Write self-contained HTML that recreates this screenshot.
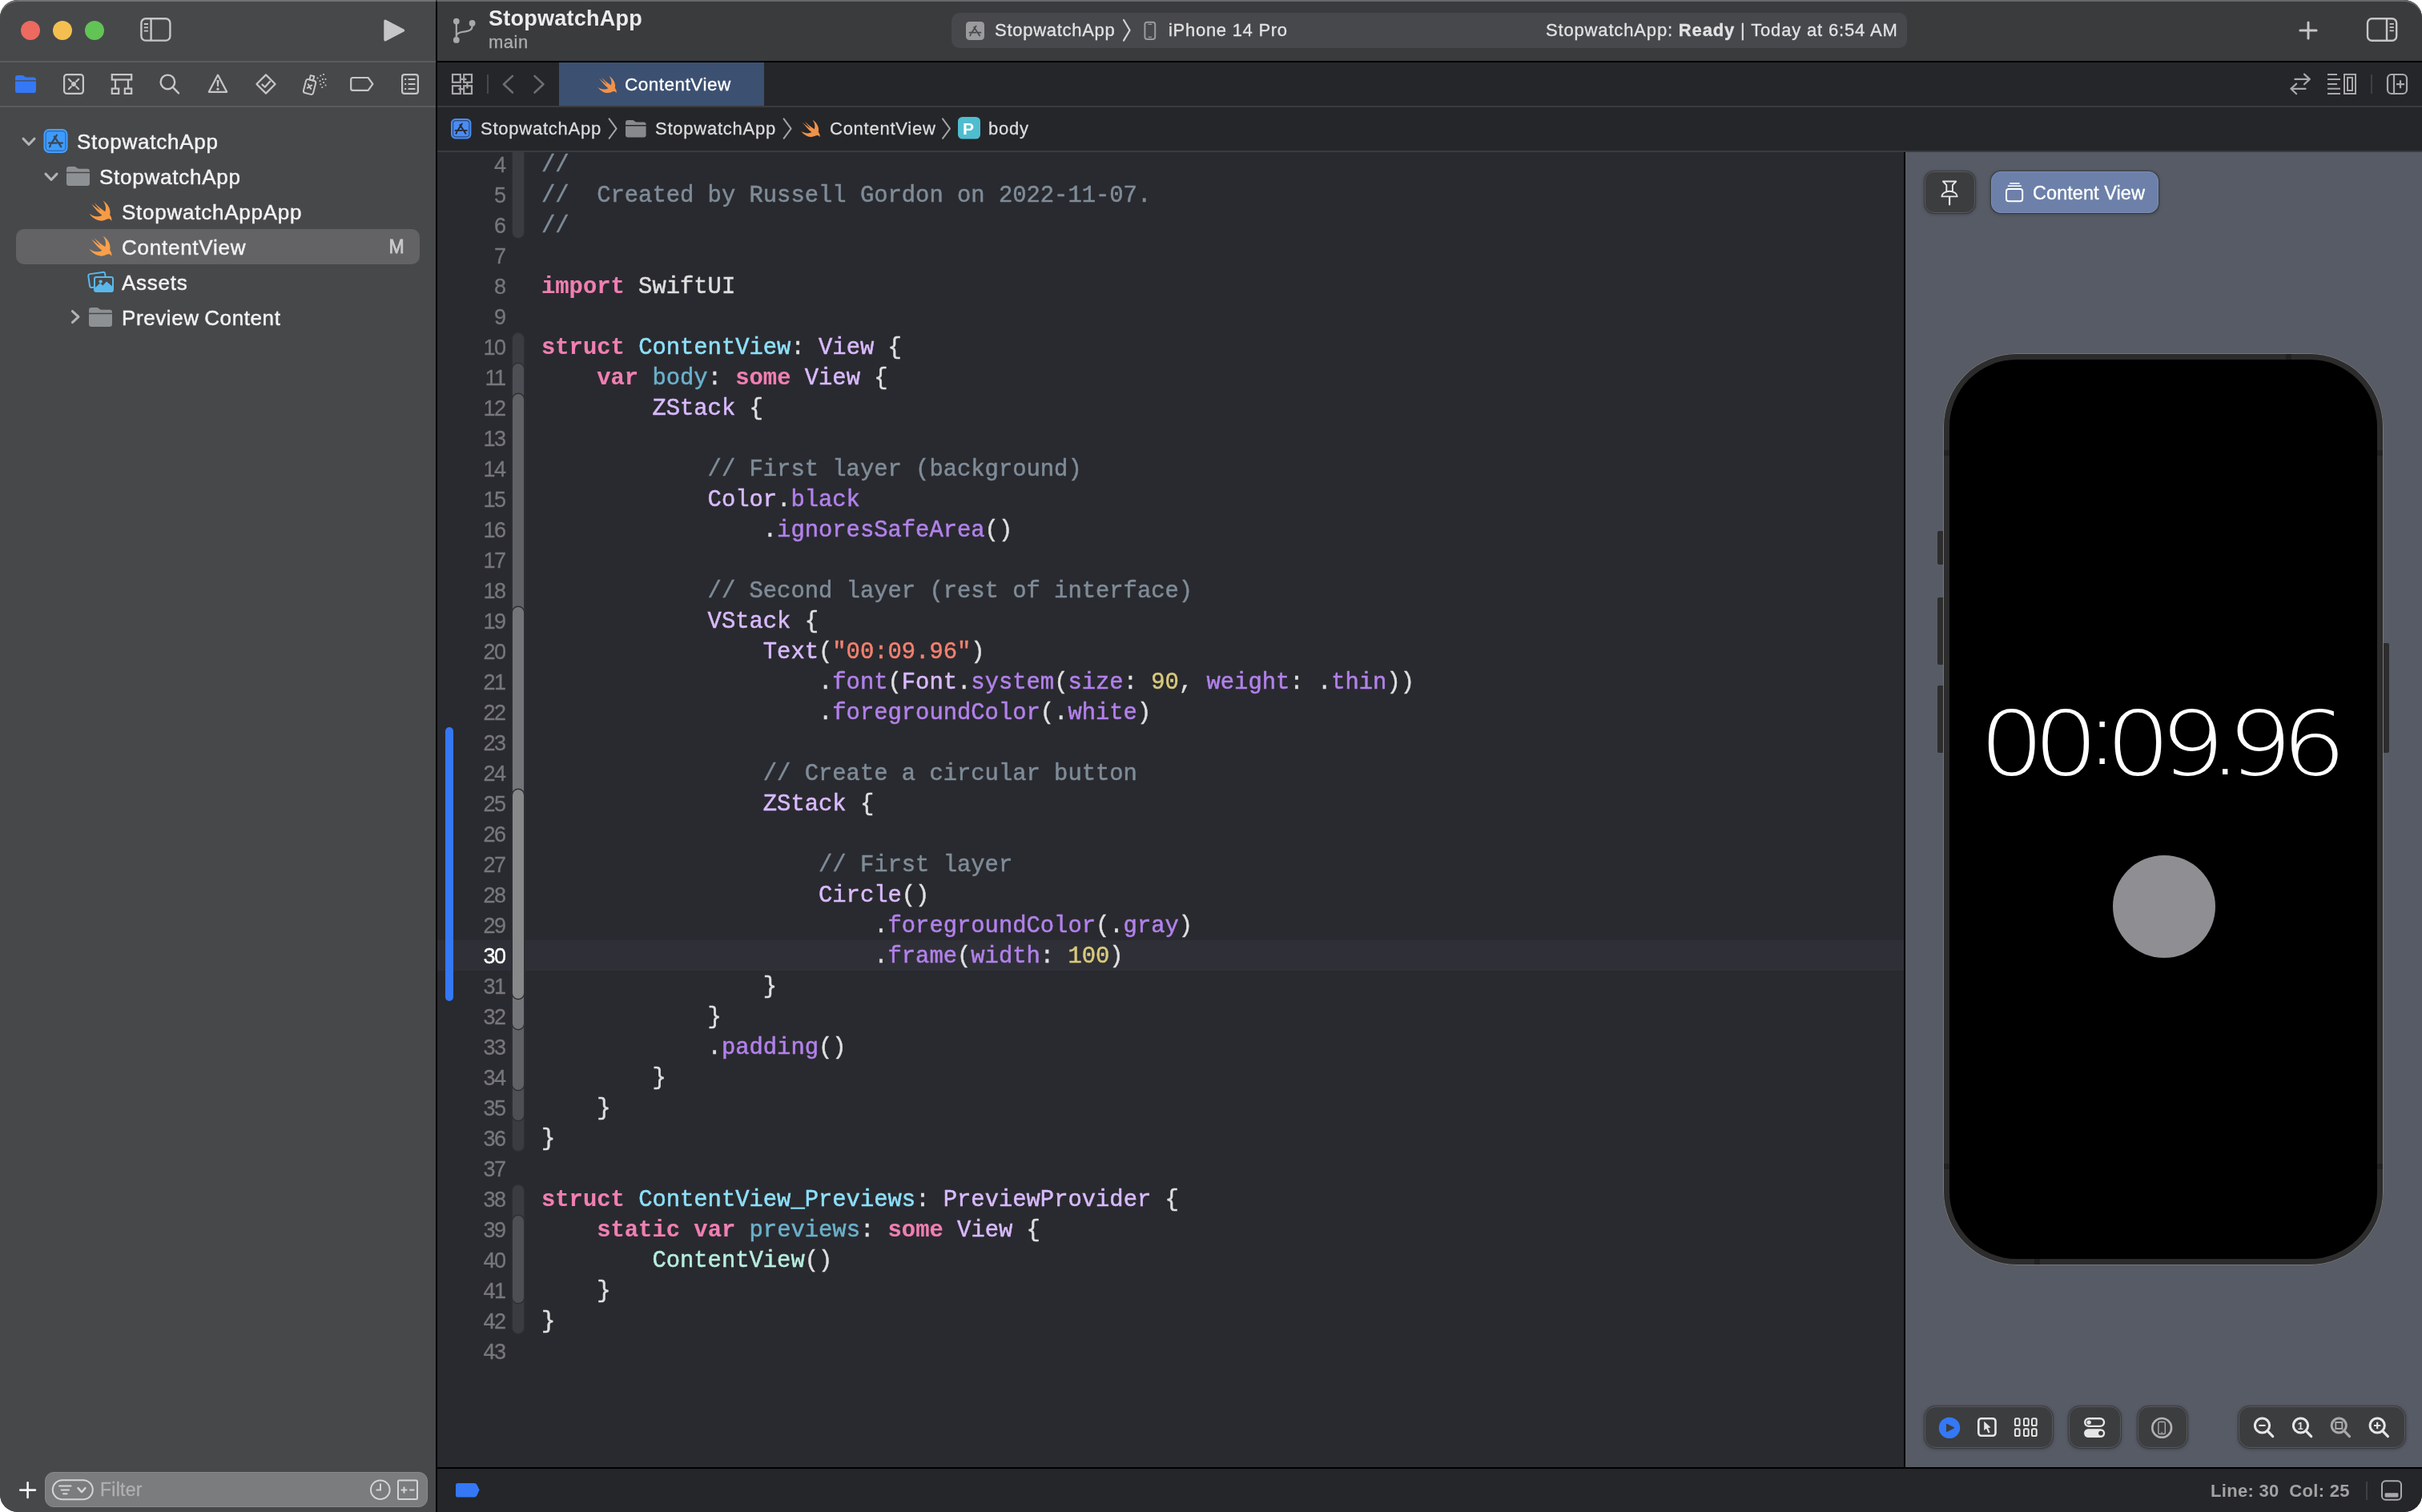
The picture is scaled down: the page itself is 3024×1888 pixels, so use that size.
<!DOCTYPE html>
<html lang="en">
<head>
<meta charset="utf-8">
<title>StopwatchApp — ContentView.swift</title>
<style>
html,body{margin:0;padding:0;background:#fff;}
body{width:3024px;height:1888px;overflow:hidden;position:relative;font-family:"Liberation Sans",sans-serif;color:#e6e6e6;-webkit-font-smoothing:antialiased;}
#win{will-change:transform;position:absolute;left:0;top:0;width:3024px;height:1888px;border-radius:22px;overflow:hidden;background:#292a2f;}
.abs{position:absolute;}
svg{position:absolute;overflow:visible;}
.t{position:absolute;white-space:nowrap;line-height:1;z-index:2;}
#ic{z-index:1;}
/* sidebar */
#side{position:absolute;left:0;top:0;width:544px;height:1888px;background:#47484a;}
#toph{position:absolute;left:0;top:0;width:3024px;height:1888px;border-radius:22px;box-shadow:inset 0 2px 0 0 rgba(255,255,255,0.23);z-index:3;pointer-events:none;}
#sdiv{position:absolute;left:544px;top:0;width:2px;height:1888px;background:#000;}
.hl{position:absolute;left:0;width:544px;height:2px;background:#5a5b5d;}
.row{font-size:26px;color:#f2f2f3;letter-spacing:0.75px;-webkit-text-stroke:0.45px currentColor;margin-top:1px;}
.tbt{font-size:22px;color:#e2e2e4;letter-spacing:0.72px;-webkit-text-stroke:0.3px currentColor;}
.bc{font-size:22px;color:#dcdcde;letter-spacing:0.75px;-webkit-text-stroke:0.3px currentColor;}
/* toolbar */
#tb{position:absolute;left:546px;top:0;width:2478px;height:76px;background:#3a3b3d;}
#tbline{position:absolute;left:546px;top:76px;width:2478px;height:2px;background:#000;}
#tabs{position:absolute;left:546px;top:78px;width:2478px;height:56px;background:#252629;}
#crumbs{position:absolute;left:546px;top:134px;width:2478px;height:56px;background:#252629;}
/* editor */
#ed{position:absolute;left:546px;top:190px;width:1831px;height:1642px;background:#292a2f;overflow:hidden;}
#code{position:absolute;left:0;top:-4px;width:1831px;font-family:"Liberation Mono",monospace;font-size:28.83px;color:#dfdfe0;}
.ln{position:relative;height:38px;line-height:38px;white-space:pre;}
.ln.cur{background:#2f3037;}
.num{position:absolute;left:0;top:0;width:84.6px;text-align:right;color:#77777b;font-family:"Liberation Sans",sans-serif;font-size:27px;letter-spacing:-1.5px;line-height:41.6px;-webkit-text-stroke:0.3px currentColor;}
.cur .num{color:#ffffff;}
.tx{position:absolute;left:130px;top:2px;-webkit-text-stroke:0.5px currentColor;}
.k{color:#f07fb2;font-weight:bold;-webkit-text-stroke:0.15px currentColor;}
.d{color:#8de0fb;}
.f{color:#b281eb;}
.v{color:#6bb1cd;}
.c{color:#7f8c98;}
.s{color:#f4816f;}
.n{color:#d9c97c;}
.p{color:#b7eedd;}
.ty{color:#d9baff;}
.rb{position:absolute;left:94px;width:14px;border-radius:7px;box-shadow:0 0 0 1.5px #2e2f34;}
/* canvas */
#cdiv{position:absolute;left:2377px;top:190px;width:2px;height:1642px;background:#000;}
#cv{position:absolute;left:2379px;top:190px;width:645px;height:1642px;background:#575b65;overflow:hidden;}
.cbtn{position:absolute;box-sizing:border-box;background:#3c3d3e;border:1px solid #59595b;border-radius:12px;box-shadow:0 0 1px 1px rgba(40,42,48,0.55),0 1px 5px rgba(0,0,0,0.3);}
.r14{border-radius:14px;}
#phone{overflow:hidden;position:absolute;left:47px;top:251px;width:550px;height:1139px;border-radius:92px;background:#2c2c2d;box-shadow:0 0 0 1px #77787a inset;}
#screen{position:absolute;left:8px;top:8px;width:534px;height:1123px;border-radius:84px;background:#000;overflow:hidden;}
#sw{position:absolute;left:-6.7px;top:425px;width:534px;text-align:center;color:#fff;font-family:"DejaVu Sans Light","DejaVu Sans",sans-serif;font-weight:200;font-size:110.5px;line-height:1;white-space:nowrap;letter-spacing:-11.4px;transform:scaleX(1.15);transform-origin:50% 50%;}
#sw .cl{margin:0 -3.2px;position:relative;top:-13.5px;}
#sw .pd{margin:0 -3.65px 0 -5.85px;}
#bline{position:absolute;left:546px;top:1832px;width:2478px;height:2px;background:#000;}
#bot{position:absolute;left:546px;top:1834px;width:2478px;height:54px;background:#252629;}
</style>
</head>
<body>

<div id="win">
<div id="side">
  <div class="hl" style="top:76px"></div>
  <div class="hl" style="top:132px"></div>
  <div class="abs" style="left:20px;top:286px;width:504px;height:44px;border-radius:10px;background:#636366;"></div>
  <div class="t row" style="left:96px;top:163px;">StopwatchApp</div>
  <div class="t row" style="left:124px;top:207px;">StopwatchApp</div>
  <div class="t row" style="left:152px;top:251px;">StopwatchAppApp</div>
  <div class="t row" style="left:152px;top:295px;">ContentView</div>
  <div class="t row" style="left:152px;top:339px;">Assets</div>
  <div class="t row" style="left:152px;top:383px;word-spacing:-1.3px;letter-spacing:0.6px;">Preview Content</div>
  <div class="t" style="left:485.5px;top:296.5px;font-size:23px;font-weight:normal;-webkit-text-stroke:0.8px #c9c9cb;color:#c9c9cb;">M</div>
  <div class="abs" style="left:56px;top:1838px;width:478px;height:44px;border-radius:11px;background:#7b7c7e;box-sizing:border-box;border:1px solid #88898b;"></div>
  <div class="t" style="left:125px;top:1849px;font-size:23px;color:#b0b0b2;letter-spacing:0.25px;-webkit-text-stroke:0.3px currentColor;">Filter</div>
</div>
<div id="sdiv"></div>
<div id="toph"></div>
<div id="tb">
  <div class="t" style="left:64px;top:9.5px;font-size:27px;font-weight:bold;color:#ececee;letter-spacing:0.25px;">StopwatchApp</div>
  <div class="t" style="left:64px;top:41.5px;font-size:22px;color:#adadaf;letter-spacing:0.5px;-webkit-text-stroke:0.3px currentColor;">main</div>
  <div class="abs" style="left:642px;top:16px;width:1193px;height:44px;border-radius:10px;background:#47484b;"></div>
  <div class="t tbt" style="left:696px;top:27px;">StopwatchApp</div>
  <div class="t tbt" style="left:913px;top:27px;">iPhone 14 Pro</div>
  <div class="t tbt" style="left:1384px;top:27px;letter-spacing:0.84px;">StopwatchApp: <b>Ready</b> | Today at 6:54 AM</div>
</div>
<div id="tbline"></div>
<div id="tabs">
  <div class="abs" style="left:152px;top:0;width:256px;height:54px;background:#3c5071;"></div>
  <div class="t" style="left:234px;top:17px;font-size:22.5px;color:#ffffff;letter-spacing:0.5px;-webkit-text-stroke:0.3px currentColor;">ContentView</div>
  <div class="abs" style="left:0;top:54px;width:2478px;height:2px;background:#3a3b3f;"></div>
</div>
<div id="crumbs">
  <div class="t bc" style="left:54px;top:16px;">StopwatchApp</div>
  <div class="t bc" style="left:272px;top:16px;">StopwatchApp</div>
  <div class="t bc" style="left:490px;top:16px;">ContentView</div>
  <div class="t" style="left:656px;top:16px;font-size:21px;font-weight:bold;color:#fff;">P</div>
  <div class="t bc" style="left:688px;top:16px;">body</div>
  <div class="abs" style="left:0;top:54px;width:2478px;height:2px;background:#3a3b3f;"></div>
</div>
<div id="ed">
<div id="code">
<div class="ln"><span class="num">4</span><span class="tx"><span class="c">//</span></span></div>
<div class="ln"><span class="num">5</span><span class="tx"><span class="c">//  Created by Russell Gordon on 2022-11-07.</span></span></div>
<div class="ln"><span class="num">6</span><span class="tx"><span class="c">//</span></span></div>
<div class="ln"><span class="num">7</span><span class="tx"></span></div>
<div class="ln"><span class="num">8</span><span class="tx"><span class="k">import</span> SwiftUI</span></div>
<div class="ln"><span class="num">9</span><span class="tx"></span></div>
<div class="ln"><span class="num">10</span><span class="tx"><span class="k">struct</span> <span class="d">ContentView</span>: <span class="ty">View</span> {</span></div>
<div class="ln"><span class="num">11</span><span class="tx">    <span class="k">var</span> <span class="v">body</span>: <span class="k">some</span> <span class="ty">View</span> {</span></div>
<div class="ln"><span class="num">12</span><span class="tx">        <span class="ty">ZStack</span> {</span></div>
<div class="ln"><span class="num">13</span><span class="tx"></span></div>
<div class="ln"><span class="num">14</span><span class="tx">            <span class="c">// First layer (background)</span></span></div>
<div class="ln"><span class="num">15</span><span class="tx">            <span class="ty">Color</span>.<span class="f">black</span></span></div>
<div class="ln"><span class="num">16</span><span class="tx">                .<span class="f">ignoresSafeArea</span>()</span></div>
<div class="ln"><span class="num">17</span><span class="tx"></span></div>
<div class="ln"><span class="num">18</span><span class="tx">            <span class="c">// Second layer (rest of interface)</span></span></div>
<div class="ln"><span class="num">19</span><span class="tx">            <span class="ty">VStack</span> {</span></div>
<div class="ln"><span class="num">20</span><span class="tx">                <span class="ty">Text</span>(<span class="s">"00:09.96"</span>)</span></div>
<div class="ln"><span class="num">21</span><span class="tx">                    .<span class="f">font</span>(<span class="ty">Font</span>.<span class="f">system</span>(<span class="f">size</span>: <span class="n">90</span>, <span class="f">weight</span>: .<span class="f">thin</span>))</span></div>
<div class="ln"><span class="num">22</span><span class="tx">                    .<span class="f">foregroundColor</span>(.<span class="f">white</span>)</span></div>
<div class="ln"><span class="num">23</span><span class="tx"></span></div>
<div class="ln"><span class="num">24</span><span class="tx">                <span class="c">// Create a circular button</span></span></div>
<div class="ln"><span class="num">25</span><span class="tx">                <span class="ty">ZStack</span> {</span></div>
<div class="ln"><span class="num">26</span><span class="tx"></span></div>
<div class="ln"><span class="num">27</span><span class="tx">                    <span class="c">// First layer</span></span></div>
<div class="ln"><span class="num">28</span><span class="tx">                    <span class="ty">Circle</span>()</span></div>
<div class="ln"><span class="num">29</span><span class="tx">                        .<span class="f">foregroundColor</span>(.<span class="f">gray</span>)</span></div>
<div class="ln cur"><span class="num">30</span><span class="tx">                        .<span class="f">frame</span>(<span class="f">width</span>: <span class="n">100</span>)</span></div>
<div class="ln"><span class="num">31</span><span class="tx">                }</span></div>
<div class="ln"><span class="num">32</span><span class="tx">            }</span></div>
<div class="ln"><span class="num">33</span><span class="tx">            .<span class="f">padding</span>()</span></div>
<div class="ln"><span class="num">34</span><span class="tx">        }</span></div>
<div class="ln"><span class="num">35</span><span class="tx">    }</span></div>
<div class="ln"><span class="num">36</span><span class="tx">}</span></div>
<div class="ln"><span class="num">37</span><span class="tx"></span></div>
<div class="ln"><span class="num">38</span><span class="tx"><span class="k">struct</span> <span class="d">ContentView_Previews</span>: <span class="ty">PreviewProvider</span> {</span></div>
<div class="ln"><span class="num">39</span><span class="tx">    <span class="k">static</span> <span class="k">var</span> <span class="v">previews</span>: <span class="k">some</span> <span class="ty">View</span> {</span></div>
<div class="ln"><span class="num">40</span><span class="tx">        <span class="p">ContentView</span>()</span></div>
<div class="ln"><span class="num">41</span><span class="tx">    }</span></div>
<div class="ln"><span class="num">42</span><span class="tx">}</span></div>
<div class="ln"><span class="num">43</span><span class="tx"></span></div>
</div>
<div class="rb" style="top:-116px;height:222.7px;background:#3b3c41;"></div>
<div class="rb" style="top:226.0px;height:1020.7px;background:#3b3c41;"></div>
<div class="rb" style="top:264.0px;height:944.7px;background:#4e4f54;"></div>
<div class="rb" style="top:302.0px;height:868.7px;background:#606165;"></div>
<div class="rb" style="top:568.0px;height:526.7px;background:#747578;"></div>
<div class="rb" style="top:796.0px;height:260.7px;background:#87888a;"></div>
<div class="rb" style="top:1290.0px;height:184.7px;background:#3b3c41;"></div>
<div class="rb" style="top:1328.0px;height:108.7px;background:#4e4f54;"></div>
<div class="abs" style="left:10px;top:718px;width:10px;height:342px;border-radius:5px;background:#3478f6;"></div>
</div>
<div id="cdiv"></div>
<div id="cv">
  <div class="cbtn" style="left:24.3px;top:23.9px;width:62.5px;height:52px;"></div>
  <div class="cbtn" style="left:107px;top:24px;width:209px;height:52px;background:#6c80a9;border-color:#7c8eb4;"></div>
  <div class="t" style="left:159px;top:39.5px;font-size:23.5px;color:#fff;letter-spacing:0.05px;-webkit-text-stroke:0.35px #fff;">Content View</div>
  <!-- phone -->
  <div class="abs" style="left:40px;top:473px;width:8px;height:42px;background:#2d2d2e;border-radius:2px 0 0 2px;"></div>
  <div class="abs" style="left:40px;top:556px;width:8px;height:84px;background:#2d2d2e;border-radius:2px 0 0 2px;"></div>
  <div class="abs" style="left:40px;top:666px;width:8px;height:84px;background:#2d2d2e;border-radius:2px 0 0 2px;"></div>
  <div class="abs" style="left:596px;top:613px;width:7.5px;height:137px;background:#2d2d2e;border-radius:0 2px 2px 0;"></div>
  <div id="phone">
    <div class="abs" style="left:1px;top:121px;width:7px;height:7px;background:#222223;"></div>
    <div class="abs" style="left:542px;top:121px;width:7px;height:7px;background:#222223;"></div>
    <div class="abs" style="left:1px;top:1012px;width:7px;height:7px;background:#222223;"></div>
    <div class="abs" style="left:542px;top:1012px;width:7px;height:7px;background:#222223;"></div>
    <div class="abs" style="left:428px;top:1px;width:7px;height:7px;background:#222223;"></div>
    <div class="abs" style="left:114px;top:1131px;width:7px;height:7px;background:#222223;"></div>
    <div id="screen">
      <div id="sw">00<span class="cl">:</span>09<span class="pd">.</span>96</div>
      <div class="abs" style="left:203.8px;top:618.6px;width:128.5px;height:128.5px;border-radius:50%;background:#8e8e93;"></div>
    </div>
  </div>
  <!-- bottom toolbar -->
  <div class="cbtn r14" style="left:24px;top:1566px;width:160px;height:52px;"></div>
  <div class="cbtn r14" style="left:204px;top:1566px;width:64.5px;height:52px;"></div>
  <div class="cbtn r14" style="left:289.5px;top:1566px;width:62px;height:52px;"></div>
  <div class="cbtn r14" style="left:416px;top:1566px;width:207.5px;height:52px;"></div>
</div>
<div id="bline"></div>
<div id="bot">
  <div class="t" style="left:2214px;top:17px;font-size:22px;font-weight:bold;color:#a2a2a4;letter-spacing:0.3px;word-spacing:0px;">Line: 30&nbsp;&nbsp;Col: 25</div>
  <div class="abs" style="left:2408px;top:15.5px;width:2px;height:23px;background:#3f4044;"></div>
</div>
<svg id="ic" width="3024" height="1888" viewBox="0 0 3024 1888" style="left:0;top:0;pointer-events:none"><circle cx="38" cy="38" r="12" fill="#ec6a5f"/><circle cx="78" cy="38" r="12" fill="#f4bf50"/><circle cx="118" cy="38" r="12" fill="#61c455"/>
<g fill="none" stroke="#c6c6c8" stroke-width="2.4"><rect x="176.4" y="23.2" width="36" height="27.4" rx="5.5"/><path d="M188.6,23.2 V50.6"/><path d="M179.8,30 h5.2 M179.8,34.3 h5.2 M179.8,38.6 h5.2" stroke-width="1.8"/></g>
<path d="M481,26.2 L503.5,38 L481,49.8 Z" fill="#c6c6c8" stroke="#c6c6c8" stroke-width="3.4" stroke-linejoin="round"/>
<path fill="#3478f6" d="M22.08,94.00 H27.84 Q29.14,94.00 30.18,95.10 L31.22,96.09 Q32.00,96.53 33.30,96.53 H41.92 Q45.00,96.53 45.00,99.61 V100.27 H19.00 V97.08 Q19.00,94.00 22.08,94.00 Z"/><path fill="#3478f6" d="M19.00,101.59 H45.00 V112.92 Q45.00,116.00 41.92,116.00 H22.08 Q19.00,116.00 19.00,112.92 Z"/>
<g fill="none" stroke="#c6c6c8" stroke-width="2.2" stroke-linecap="round"><rect x="80.1" y="93.1" width="23.8" height="23.8" rx="3.5"/><path d="M85.8,98.8 l3,3 M98.2,98.8 l-3,3 M85.8,111.2 l3,-3 M98.2,111.2 l-3,-3"/></g><circle cx="92" cy="105" r="3" fill="#c6c6c8"/>
<g fill="none" stroke="#c6c6c8" stroke-width="2.2"><rect x="139.8" y="93.1" width="24.4" height="6.4"/><rect x="139.8" y="110.6" width="8.4" height="6.3"/><rect x="155.8" y="110.6" width="8.4" height="6.3"/><path d="M144,99.5 V110.6 M160,99.5 V110.6"/></g>
<g fill="none" stroke="#c6c6c8" stroke-width="2.4" stroke-linecap="round"><circle cx="209.4" cy="102.4" r="8.8"/><path d="M215.8,108.8 L223,116.4"/></g>
<g fill="none" stroke="#c6c6c8" stroke-width="2.2" stroke-linejoin="round"><path d="M272,93.6 L283.2,114.8 H260.8 Z"/></g><path d="M270.5,100 H273.5 L272.9,108 H271.1 Z" fill="#c6c6c8"/><circle cx="272" cy="111.2" r="1.6" fill="#c6c6c8"/>
<g fill="none" stroke="#c6c6c8" stroke-width="2.2" stroke-linejoin="round" stroke-linecap="round"><path d="M332,93.4 L343.6,105 L332,116.6 L320.4,105 Z" stroke-width="2.2"/><path d="M327.4,105.6 L330.8,108.8 L337,101.8"/></g>
<g fill="none" stroke="#c6c6c8" stroke-width="2" stroke-linejoin="round" stroke-linecap="round" transform="rotate(14 390 106)"><rect x="381" y="100.5" width="12.5" height="17.5" rx="2.5"/><rect x="385" y="95" width="4.6" height="5.5"/><path d="M384.8,106.6 l4.6,4.6 M389.4,106.6 l-4.6,4.6"/></g>
<g fill="#c6c6c8"><rect x="395.6" y="96.6" width="1.8" height="1.8"/><rect x="399.4" y="93.6" width="1.8" height="1.8"/><rect x="403.2" y="92" width="1.8" height="1.8"/><rect x="398.6" y="100.2" width="1.8" height="1.8"/><rect x="402" y="98" width="1.8" height="1.8"/><rect x="405.6" y="98" width="1.8" height="1.8"/><rect x="399.4" y="104.4" width="1.8" height="1.8"/><rect x="403.2" y="102.2" width="1.8" height="1.8"/><rect x="405.6" y="105.6" width="1.8" height="1.8"/><rect x="401.4" y="108.2" width="1.8" height="1.8"/></g>
<path d="M440.6,97 H459.6 L465.4,104.9 L459.6,112.8 H440.6 Q438.2,112.8 438.2,110.4 V99.4 Q438.2,97 440.6,97 Z" fill="none" stroke="#c6c6c8" stroke-width="2.2" stroke-linejoin="round"/>
<g fill="none" stroke="#c6c6c8" stroke-width="2.2"><rect x="502.1" y="93.1" width="19.8" height="23.8" rx="3"/><path d="M509.6,99 H518.4 M509.6,105 H518.4 M509.6,111 H518.4"/></g><g fill="#c6c6c8"><rect x="505.2" y="98" width="2" height="2"/><rect x="505.2" y="104" width="2" height="2"/><rect x="505.2" y="110" width="2" height="2"/></g>
<path d="M29.0,173.10000000000002 L36,180.5 L43.0,173.10000000000002" fill="none" stroke="#b4b4b6" stroke-width="3" stroke-linecap="round" stroke-linejoin="round"/>
<rect x="54.5" y="161" width="30" height="30" rx="6.6" fill="#45a1ff"/><rect x="56.5" y="163" width="26" height="26" rx="4.8" fill="#2d66a8"/><rect x="57.7" y="164.2" width="23.6" height="23.6" rx="3.6" fill="#3d9bfd"/><g stroke="#3b4652" stroke-width="2.25" stroke-linecap="round" fill="none"><path d="M70.84,168.78 L64.46,178.60 M63.12,180.91 L62.11,183.22"/><path d="M67.82,170.51 L76.22,183.22"/><path d="M61.10,178.60 H70.84 M74.54,178.60 H77.90"/></g>
<path d="M57.0,217.10000000000002 L64,224.5 L71.0,217.10000000000002" fill="none" stroke="#b4b4b6" stroke-width="3" stroke-linecap="round" stroke-linejoin="round"/>
<path fill="#8e9194" d="M86.20,208.00 H92.86 Q94.31,208.00 95.47,209.20 L96.63,210.28 Q97.50,210.76 98.95,210.76 H108.80 Q112.00,210.76 112.00,213.96 V214.84 H83.00 V211.20 Q83.00,208.00 86.20,208.00 Z"/><path fill="#8e9194" d="M83.00,216.28 H112.00 V228.80 Q112.00,232.00 108.80,232.00 H86.20 Q83.00,232.00 83.00,228.80 Z"/>
<path transform="translate(107.86,245.57) scale(1.5376)" fill="#f89b45" d="M13.543 3.41c4.114 2.47 6.545 7.162 5.549 11.131-.024.093-.05.181-.076.272l.002.001c2.062 2.538 1.5 5.258 1.236 4.745-1.072-2.086-3.066-1.568-4.088-1.043a6.803 6.803 0 0 1-.281.158l-.02.012-.002.002c-2.115 1.123-4.957 1.205-7.812-.022a12.568 12.568 0 0 1-5.64-4.838c.649.48 1.35.902 2.097 1.252 3.019 1.414 6.051 1.311 8.197-.002C9.651 12.73 7.101 9.67 5.146 7.191a10.628 10.628 0 0 1-1.005-1.384c2.34 2.142 6.038 4.83 7.365 5.576C8.69 8.408 6.208 4.743 6.324 4.86c4.436 4.47 8.528 6.996 8.528 6.996.154.085.27.154.36.213.085-.215.16-.437.224-.668.708-2.588-.09-5.548-1.893-7.992z"/>
<path transform="translate(107.86,289.57) scale(1.5376)" fill="#fba04a" d="M13.543 3.41c4.114 2.47 6.545 7.162 5.549 11.131-.024.093-.05.181-.076.272l.002.001c2.062 2.538 1.5 5.258 1.236 4.745-1.072-2.086-3.066-1.568-4.088-1.043a6.803 6.803 0 0 1-.281.158l-.02.012-.002.002c-2.115 1.123-4.957 1.205-7.812-.022a12.568 12.568 0 0 1-5.64-4.838c.649.48 1.35.902 2.097 1.252 3.019 1.414 6.051 1.311 8.197-.002C9.651 12.73 7.101 9.67 5.146 7.191a10.628 10.628 0 0 1-1.005-1.384c2.34 2.142 6.038 4.83 7.365 5.576C8.69 8.408 6.208 4.743 6.324 4.86c4.436 4.47 8.528 6.996 8.528 6.996.154.085.27.154.36.213.085-.215.16-.437.224-.668.708-2.588-.09-5.548-1.893-7.992z"/>
<g><rect x="111" y="341" width="21" height="17" rx="2.5" fill="none" stroke="#5bb7e9" stroke-width="2" transform="rotate(-8 121 349)"/><rect x="117" y="345" width="25" height="20" rx="2.8" fill="#47484a"/><rect x="118" y="346" width="23" height="18" rx="2.2" fill="none" stroke="#5bb7e9" stroke-width="2"/><path d="M118.4,359.5 L125,353.5 L128.4,356.4 L133,351.4 L140.8,358 V362 Q140.8,364 138.8,364 H120.4 Q118.4,364 118.4,362 Z" fill="#5bb7e9"/><circle cx="125.6" cy="351.6" r="2.2" fill="#5bb7e9"/></g>
<path d="M90.4,388.6 L98.0,395.6 L90.4,402.6" fill="none" stroke="#b4b4b6" stroke-width="3" stroke-linecap="round" stroke-linejoin="round"/>
<path fill="#8e9194" d="M114.20,384.00 H120.86 Q122.31,384.00 123.47,385.20 L124.63,386.28 Q125.50,386.76 126.95,386.76 H136.80 Q140.00,386.76 140.00,389.96 V390.84 H111.00 V387.20 Q111.00,384.00 114.20,384.00 Z"/><path fill="#8e9194" d="M111.00,392.28 H140.00 V404.80 Q140.00,408.00 136.80,408.00 H114.20 Q111.00,408.00 111.00,404.80 Z"/>
<path d="M25.2,1860.6 H44 M34.6,1851.2 V1870" stroke="#f4f4f4" stroke-width="2.6" stroke-linecap="round" fill="none"/>
<rect x="65.8" y="1848.2" width="50" height="24" rx="12" fill="none" stroke="#d4d4d6" stroke-width="2"/>
<path d="M74,1855.6 H88.6 M76.6,1860.4 H86 M79,1865.2 H83.6" stroke="#d4d4d6" stroke-width="2" stroke-linecap="round"/>
<path d="M97.5,1858.1 L102,1863.1 L106.5,1858.1" fill="none" stroke="#d4d4d6" stroke-width="2.4" stroke-linecap="round" stroke-linejoin="round"/>
<circle cx="474.8" cy="1860.2" r="11.8" fill="none" stroke="#d4d4d6" stroke-width="2"/><path d="M475,1852.4 V1860.6 H469.6" fill="none" stroke="#d4d4d6" stroke-width="2"/>
<rect x="497" y="1848.4" width="24" height="23.6" rx="1.5" fill="none" stroke="#d4d4d6" stroke-width="2"/><path d="M500.6,1860.4 H508.4 M504.5,1856.4 V1864.4 M511.2,1860.4 H517.4" stroke="#d4d4d6" stroke-width="2" fill="none"/>
<g fill="none" stroke="#a9a9ab" stroke-width="2.2"><path d="M569.8,30 V46"/><path d="M589.6,32.6 Q589.6,38.6 581,39.4 Q571.4,40.2 569.9,44"/></g><circle cx="569.8" cy="26.6" r="3.9" fill="#a9a9ab"/><circle cx="589.6" cy="29" r="3.9" fill="#a9a9ab"/><circle cx="569.8" cy="49.9" r="3.9" fill="#a9a9ab"/>
<rect x="1206" y="27" width="23" height="23" rx="4.5" fill="#9b9b9d"/>
<g stroke="#47484b" stroke-width="1.70" stroke-linecap="round" fill="none"><path d="M1218.62,32.48 L1213.30,40.67 M1212.18,42.59 L1211.34,44.52"/><path d="M1216.10,33.92 L1223.10,44.52"/><path d="M1210.50,40.67 H1218.62 M1221.70,40.67 H1224.50"/></g>
<path d="M1403,25 L1410.6,37.8 L1403,50.6" fill="none" stroke="#d2d2d4" stroke-width="2.2" stroke-linecap="round" stroke-linejoin="round"/>
<rect x="1429.4" y="27.7" width="12.8" height="21.4" rx="3" fill="none" stroke="#9b9b9d" stroke-width="2"/><path d="M1433.4,30.4 h4.8 M1433.6,46.4 h4.4" stroke="#9b9b9d" stroke-width="1.4"/>
<path d="M2871.9,38 H2892.1 M2882,27.9 V48.1" stroke="#c6c6c8" stroke-width="3" stroke-linecap="round"/>
<g fill="none" stroke="#c6c6c8" stroke-width="2.4"><rect x="2956" y="23.2" width="36.2" height="27.6" rx="5.5"/><path d="M2980,23.2 V50.8"/><path d="M2983.6,29.9 h5.2 M2983.6,34.1 h5.2 M2983.6,38.4 h5.2" stroke-width="1.8"/></g>
<g fill="none" stroke="#a9a9ab" stroke-width="2.2"><rect x="565" y="93" width="9.8" height="9.8"/><rect x="579.2" y="93" width="9.8" height="9.8"/><rect x="565" y="107.2" width="9.8" height="9.8"/><rect x="579.2" y="107.2" width="9.8" height="9.8"/><path d="M574.8,98.8 H582.4 M583.4,102.8 V110.4 M572.4,111.2 H579.2"/></g>
<rect x="608" y="93" width="2" height="24" fill="#47484c"/>
<path d="M639.9,94.9 L628.9,105.2 L639.9,115.5" fill="none" stroke="#6d6d70" stroke-width="2.6" stroke-linecap="round" stroke-linejoin="round"/>
<path d="M667.5,94.9 L678.5,105.2 L667.5,115.5" fill="none" stroke="#6d6d70" stroke-width="2.6" stroke-linecap="round" stroke-linejoin="round"/>
<path transform="translate(742.78,90.44) scale(1.3118)" fill="#f0924a" d="M13.543 3.41c4.114 2.47 6.545 7.162 5.549 11.131-.024.093-.05.181-.076.272l.002.001c2.062 2.538 1.5 5.258 1.236 4.745-1.072-2.086-3.066-1.568-4.088-1.043a6.803 6.803 0 0 1-.281.158l-.02.012-.002.002c-2.115 1.123-4.957 1.205-7.812-.022a12.568 12.568 0 0 1-5.64-4.838c.649.48 1.35.902 2.097 1.252 3.019 1.414 6.051 1.311 8.197-.002C9.651 12.73 7.101 9.67 5.146 7.191a10.628 10.628 0 0 1-1.005-1.384c2.34 2.142 6.038 4.83 7.365 5.576C8.69 8.408 6.208 4.743 6.324 4.86c4.436 4.47 8.528 6.996 8.528 6.996.154.085.27.154.36.213.085-.215.16-.437.224-.668.708-2.588-.09-5.548-1.893-7.992z"/>
<g fill="none" stroke="#a9a9ab" stroke-width="2.2" stroke-linecap="round" stroke-linejoin="round"><path d="M2865.4,98.9 H2883.6 M2877,92.6 L2883.8,98.9 L2877,105.2"/><path d="M2878.6,110.8 H2860.6 M2867.2,104.6 L2860.4,110.8 L2867.2,117.2"/></g>
<g fill="none" stroke="#a9a9ab" stroke-width="2"><path d="M2906,93 H2918 M2906,98.9 H2922 M2906,104.9 H2918 M2906,110.8 H2922 M2906,117 H2922"/><rect x="2927" y="92.9" width="14" height="24.1"/><rect x="2931" y="96.9" width="6" height="16.1"/></g>
<rect x="2960" y="93" width="2" height="24" fill="#3f4044"/>
<g fill="none" stroke="#a9a9ab" stroke-width="2.2"><rect x="2981" y="93" width="24" height="24" rx="5"/><path d="M2989,93 V117"/><path d="M2992,105.2 H3002 M2997,100.2 V110.2"/></g>
<rect x="563" y="148" width="25.4" height="25.4" rx="5.6" fill="#4b8cf2"/><rect x="565" y="150" width="21.4" height="21.4" rx="4.1" fill="#2b4a80"/><rect x="566.2" y="151.2" width="19.0" height="19.0" rx="3.0" fill="#4b8cf2"/><g stroke="#26272b" stroke-width="1.90" stroke-linecap="round" fill="none"><path d="M576.84,154.58 L571.43,162.90 M570.29,164.86 L569.44,166.82"/><path d="M574.28,156.05 L581.39,166.82"/><path d="M568.59,162.90 H576.84 M579.97,162.90 H582.81"/></g>
<path d="M760.6,148.4 L769.6,160.6 L760.6,172.8" fill="none" stroke="#a4a4a6" stroke-width="2" stroke-linecap="round" stroke-linejoin="round"/>
<path fill="#88898c" d="M784.00,150.00 H789.70 Q790.98,150.00 792.01,151.07 L793.03,152.03 Q793.80,152.46 795.08,152.46 H803.60 Q806.60,152.46 806.60,155.46 V156.10 H781.00 V153.00 Q781.00,150.00 784.00,150.00 Z"/><path fill="#88898c" d="M781.00,157.38 H806.60 V168.40 Q806.60,171.40 803.60,171.40 H784.00 Q781.00,171.40 781.00,168.40 Z"/>
<path d="M978.6,148.4 L987.6,160.6 L978.6,172.8" fill="none" stroke="#a4a4a6" stroke-width="2" stroke-linecap="round" stroke-linejoin="round"/>
<path transform="translate(996.78,145.34) scale(1.3118)" fill="#f0924a" d="M13.543 3.41c4.114 2.47 6.545 7.162 5.549 11.131-.024.093-.05.181-.076.272l.002.001c2.062 2.538 1.5 5.258 1.236 4.745-1.072-2.086-3.066-1.568-4.088-1.043a6.803 6.803 0 0 1-.281.158l-.02.012-.002.002c-2.115 1.123-4.957 1.205-7.812-.022a12.568 12.568 0 0 1-5.64-4.838c.649.48 1.35.902 2.097 1.252 3.019 1.414 6.051 1.311 8.197-.002C9.651 12.73 7.101 9.67 5.146 7.191a10.628 10.628 0 0 1-1.005-1.384c2.34 2.142 6.038 4.83 7.365 5.576C8.69 8.408 6.208 4.743 6.324 4.86c4.436 4.47 8.528 6.996 8.528 6.996.154.085.27.154.36.213.085-.215.16-.437.224-.668.708-2.588-.09-5.548-1.893-7.992z"/>
<path d="M1177,148.4 L1186,160.6 L1177,172.8" fill="none" stroke="#a4a4a6" stroke-width="2" stroke-linecap="round" stroke-linejoin="round"/>
<rect x="1196" y="146" width="28" height="27.6" rx="5.5" fill="#4fbdd0"/>
<g fill="none" stroke="#e6e6e6" stroke-width="1.9" stroke-linejoin="round" stroke-linecap="round"><path d="M2430.3,239.4 V231.2 L2426,226.5 H2442.2 L2437.9,231.2 V239.4"/><path d="M2424.5,245.4 A9.6,6.6 0 0 1 2443.7,245.4 Z"/><path d="M2434.1,246 V255.4" stroke-width="2.2"/></g>
<g fill="none" stroke="#ffffff" stroke-width="2"><path d="M2509.2,229 H2521.6" stroke-width="1.6"/><path d="M2506.8,232.2 H2523.8" stroke-width="1.6"/><rect x="2505" y="236" width="20.2" height="15.2" rx="3"/></g>
<circle cx="2434" cy="1782.9" r="13.2" fill="#3478f6"/><path d="M2430.6,1778.4 L2439.4,1782.9 L2430.6,1787.4 Z" fill="#3c3d3e" stroke="#3c3d3e" stroke-width="1.2" stroke-linejoin="round"/>
<rect x="2470.3" y="1771.2" width="21.2" height="21.6" rx="3.5" fill="none" stroke="#e6e6e6" stroke-width="2.6"/><path d="M2477.2,1774.8 L2477.2,1786.2 L2480,1783.8 L2482.6,1789.4 L2484.6,1788.4 L2482,1783 L2485.6,1782.6 Z" fill="#e6e6e6"/>
<g fill="none" stroke="#e6e6e6" stroke-width="2"><rect x="2515.9" y="1771.3" width="5.7" height="8.7" rx="1.6"/><rect x="2515.9" y="1784.3" width="5.7" height="8.7" rx="1.6"/><rect x="2527" y="1771.3" width="5.7" height="8.7" rx="1.6"/><rect x="2527" y="1784.3" width="5.7" height="8.7" rx="1.6"/><rect x="2537" y="1771.3" width="5.7" height="8.7" rx="1.6"/><rect x="2537" y="1784.3" width="5.7" height="8.7" rx="1.6"/></g>
<rect x="2603.2" y="1771.3" width="23.8" height="9.6" rx="4.8" fill="none" stroke="#e6e6e6" stroke-width="2.4"/><circle cx="2608.1" cy="1776.1" r="2.7" fill="#e6e6e6"/><rect x="2602" y="1784.2" width="26.2" height="10.8" rx="5.4" fill="#e6e6e6"/><circle cx="2623" cy="1789.6" r="2.9" fill="#3c3d3e"/>
<circle cx="2699.2" cy="1782.9" r="11.9" fill="none" stroke="#b2b2b3" stroke-width="2.6"/><rect x="2694.9" y="1775.3" width="8.4" height="15.4" rx="2" fill="none" stroke="#b2b2b3" stroke-width="1.3"/><path d="M2697.4,1775.8 h3.4 M2697.6,1789 h3" stroke="#b2b2b3" stroke-width="1.1"/>
<g fill="none" stroke="#e6e6e6" stroke-linecap="round"><circle cx="2824.5" cy="1780" r="9.1" stroke-width="3"/><path d="M2831.7,1787.4 L2837.7,1793.6" stroke-width="3.2"/></g><path d="M2820.4,1780 H2828.6" stroke="#e6e6e6" stroke-width="2.2"/>
<g fill="none" stroke="#e6e6e6" stroke-linecap="round"><circle cx="2872.5" cy="1780" r="9.1" stroke-width="3"/><path d="M2879.7,1787.4 L2885.7,1793.6" stroke-width="3.2"/></g><text x="2872.3" y="1784.6" font-family="Liberation Sans, sans-serif" font-size="12.5" font-weight="bold" fill="#e6e6e6" text-anchor="middle">1</text>
<g fill="none" stroke="#a9a9aa" stroke-linecap="round"><circle cx="2920.3" cy="1780" r="9.1" stroke-width="3"/><path d="M2927.5,1787.4 L2933.5,1793.6" stroke-width="3.2"/></g><rect x="2916.3" y="1776" width="8" height="8" fill="none" stroke="#a9a9aa" stroke-width="2"/>
<g fill="none" stroke="#e6e6e6" stroke-linecap="round"><circle cx="2968.2" cy="1780" r="9.1" stroke-width="3"/><path d="M2975.3999999999996,1787.4 L2981.3999999999996,1793.6" stroke-width="3.2"/></g><path d="M2964,1780 H2972.4 M2968.2,1775.8 V1784.2" stroke="#e6e6e6" stroke-width="2.2"/>
<path d="M571.6,1852 H592.4 Q594.2,1852 595.2,1853.6 L598.6,1860.6 L595.2,1867.8 Q594.2,1869.6 592.4,1869.6 H571.6 Q569,1869.6 569,1867 V1854.6 Q569,1852 571.6,1852 Z" fill="#3478f6"/>
<rect x="2974" y="1849.3" width="24" height="23.4" rx="4.5" fill="none" stroke="#a9a9ab" stroke-width="2"/><rect x="2977.6" y="1864.2" width="16.8" height="5.4" rx="1.4" fill="#a9a9ab"/></svg>
</div>
</body>
</html>
